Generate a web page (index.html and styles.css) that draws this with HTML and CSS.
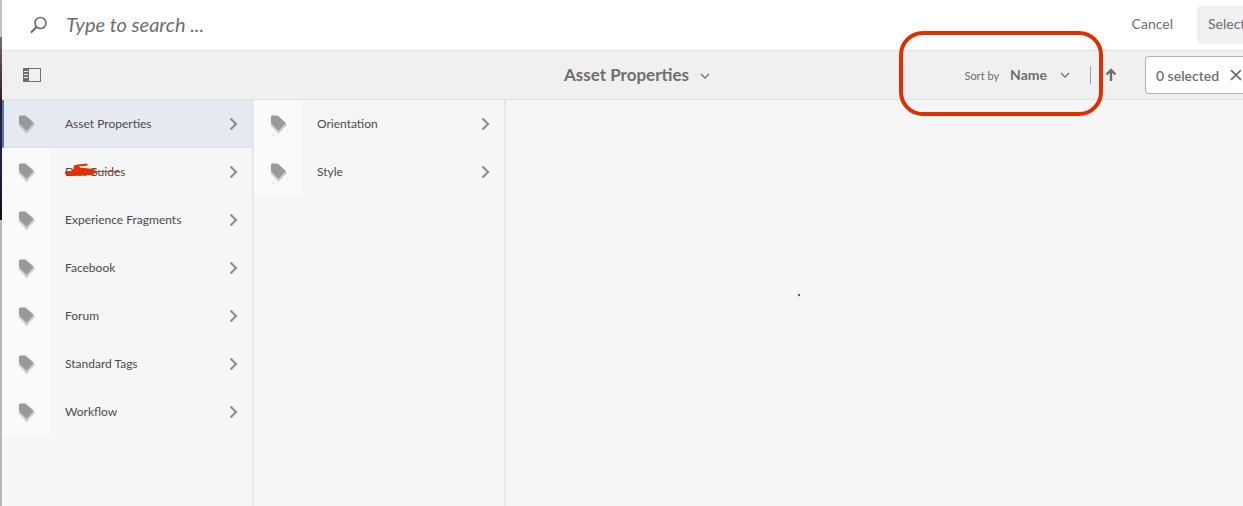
FILE: index.html
```html
<!DOCTYPE html>
<html lang="en">
<head>
	<meta charset="UTF-8">
	<title>Asset Properties</title>
	<link rel="stylesheet" href="styles.css">
</head>
<body>
	<svg class="defs" width="0" height="0">
		<symbol id="tag" viewBox="0 0 18 20"><path d="M1 10L8.500 18 16 10l.7.700L8.500 19.500 1 11.500z" fill="#b4b4b4"/><path d="M1.500 2h6l8 7-7 7.800-7-7.500z" fill="#9a9a9a" stroke="#9a9a9a" stroke-linejoin="round"/></symbol>
		<symbol id="go" viewBox="0 0 9 14"><path d="M1.500 1.500L7 7l-5.500 5.500" fill="none" stroke="#8e8e8e" stroke-width="2.200"/></symbol>
		<symbol id="chev" viewBox="0 0 10 6"><path d="M1 1l4 4 4-4" fill="none" stroke="#6e6e6e" stroke-width="1.300"/></symbol>
	</svg>
	<div class="edge"></div>
	<div class="page">
		<header class="search">
			<svg class="search-icon" width="20" height="20" viewBox="0 0 20 20"><circle cx="11.500" cy="8" r="5.500" fill="none" stroke="#6e6e6e" stroke-width="1.600"/><path d="M7.500 12L2.500 17" stroke="#6e6e6e" stroke-width="2.200" stroke-linecap="round"/></svg>
			<span class="search-text">Type to search ...</span>
			<span class="cancel">Cancel</span>
			<span class="select">Select</span>
		</header>
		<div class="toolbar">
			<svg class="rail-icon" width="18" height="14" viewBox="0 0 18 14"><rect x="0.500" y="0.500" width="17" height="13" fill="none" stroke="#6e6e6e"/><rect x="0" y="0" width="6" height="14" fill="#6e6e6e"/><path d="M1 3.500h4M1 6.500h4M1 9.500h4" stroke="#f0f0f0"/></svg>
			<div class="title">Asset Properties
				<svg class="chev" width="10" height="6"><use href="#chev"/></svg>
			</div>
			<div class="sort">
				<span class="sort-label">Sort by</span>
				<span class="sort-value">Name</span>
				<svg class="chev" width="10" height="6"><use href="#chev"/></svg>
				<span class="divider"></span>
				<svg class="arrow" width="12" height="14" viewBox="0 0 12 14"><path d="M6 13V2M1.500 6.500L6 2l4.500 4.500" fill="none" stroke="#6e6e6e" stroke-width="2.400"/></svg>
			</div>
			<div class="selected">0 selected
				<svg width="14" height="14" viewBox="0 0 14 14"><path d="M2 2l10 10M12 2L2 12" stroke="#6e6e6e" stroke-width="1.800"/></svg>
			</div>
		</div>
		<div class="columns">
			<ul class="col">
				<li class="row active"><span class="tag"><svg width="18" height="20"><use href="#tag"/></svg></span><span class="name">Asset Properties</span><svg class="go" width="9" height="14"><use href="#go"/></svg></li>
				<li class="row"><span class="tag"><svg width="18" height="20"><use href="#tag"/></svg></span><span class="name">Dxx Guides<svg class="scribble" width="60" height="18" viewBox="0 0 60 18"><path d="M1 9.500l8-1 1-5 4-1 9-1 1 2-9 1 1 1 9 1 6 1 1 2-2 3-8 1-16 .5-5-2z" fill="#e0300a"/><path d="M30 9.500h26" fill="none" stroke="#c8452a" stroke-width="1"/></svg></span><svg class="go" width="9" height="14"><use href="#go"/></svg></li>
				<li class="row"><span class="tag"><svg width="18" height="20"><use href="#tag"/></svg></span><span class="name">Experience Fragments</span><svg class="go" width="9" height="14"><use href="#go"/></svg></li>
				<li class="row"><span class="tag"><svg width="18" height="20"><use href="#tag"/></svg></span><span class="name">Facebook</span><svg class="go" width="9" height="14"><use href="#go"/></svg></li>
				<li class="row"><span class="tag"><svg width="18" height="20"><use href="#tag"/></svg></span><span class="name">Forum</span><svg class="go" width="9" height="14"><use href="#go"/></svg></li>
				<li class="row"><span class="tag"><svg width="18" height="20"><use href="#tag"/></svg></span><span class="name">Standard Tags</span><svg class="go" width="9" height="14"><use href="#go"/></svg></li>
				<li class="row"><span class="tag"><svg width="18" height="20"><use href="#tag"/></svg></span><span class="name">Workflow</span><svg class="go" width="9" height="14"><use href="#go"/></svg></li>
			</ul>
			<ul class="col">
				<li class="row"><span class="tag"><svg width="18" height="20"><use href="#tag"/></svg></span><span class="name">Orientation</span><svg class="go" width="9" height="14"><use href="#go"/></svg></li>
				<li class="row"><span class="tag"><svg width="18" height="20"><use href="#tag"/></svg></span><span class="name">Style</span><svg class="go" width="9" height="14"><use href="#go"/></svg></li>
			</ul>
			<div class="preview"></div>
		</div>
	</div>
	<div class="callout"></div>
	<div class="dot"></div>
</body>
</html>
```

FILE: styles.css
```css
* {
	padding: 0;
	margin: 0;
	box-sizing: border-box;
}
ul {
	list-style: none;
}
html, body {
	width: 1243px;
	height: 506px;
	overflow: hidden;
}
body {
	position: relative;
	background: #f6f6f6;
	font-family: "Lato", "Noto Sans", sans-serif;
	color: #4b4b4b;
}
.defs {
	position: absolute;
}
.page {
	height: 506px;
	margin-left: 2px;
	display: flex;
	flex-direction: column;
}
.edge {
	position: absolute;
	left: 0;
	top: 0;
	width: 2px;
	height: 506px;
	background: linear-gradient(#c4c4c4 37px, #7a6a72 37px, #2a1c2a 100px, #1a2050 170px, #111 220px, #b8b8b8 220px);
}
.search {
	height: 51px;
	flex: none;
	background: #fff;
	border-bottom: 1px solid #e1e1e1;
	display: flex;
	align-items: center;
	padding-left: 27px;
}
.search-text {
	margin-left: 17px;
	margin-bottom: 2px;
	font-size: 20px;
	font-style: italic;
	color: #6e6e6e;
}
.cancel {
	margin-left: auto;
	margin-bottom: 3px;
	font-size: 14px;
	color: #6e6e6e;
}
.select {
	margin-left: 24px;
	width: 46px;
	height: 38px;
	padding-left: 11px;
	line-height: 36px;
	font-size: 14px;
	color: #6e6e6e;
	background: #f0f0f0;
	border-radius: 4px 0 0 4px;
	overflow: hidden;
	white-space: nowrap;
}
.toolbar {
	height: 49px;
	flex: none;
	background: #f0f0f0;
	border-bottom: 1px solid #e1e1e1;
	display: flex;
	align-items: center;
	position: relative;
	padding-left: 21px;
}
.title {
	position: absolute;
	left: 562px;
	top: 13px;
	font-size: 17px;
	font-weight: 700;
	color: #6e6e6e;
	white-space: nowrap;
}
.title .chev {
	margin-left: 7px;
	vertical-align: 2px;
}
.sort {
	margin-left: auto;
	display: flex;
	align-items: center;
}
.sort-label {
	font-size: 11px;
	color: #6e6e6e;
}
.sort-value {
	margin-left: 11px;
	margin-bottom: 2px;
	font-size: 14px;
	font-weight: 700;
	color: #6e6e6e;
}
.sort .chev {
	margin-left: 13px;
}
.divider {
	width: 1px;
	height: 18px;
	margin-left: 20px;
	background: #a0a0a0;
}
.arrow {
	margin-left: 14px;
}
.selected {
	width: 98px;
	height: 38px;
	margin-left: 28px;
	padding-left: 10px;
	flex: none;
	display: flex;
	align-items: center;
	gap: 10px;
	font-size: 14px;
	font-weight: 600;
	color: #6e6e6e;
	background: #fff;
	border: 1px solid #b3b3b3;
	border-right: 0;
	border-radius: 4px 0 0 4px;
	white-space: nowrap;
}
.columns {
	flex: 1;
	display: flex;
}
.col {
	width: 252px;
	flex: none;
	border-right: 2px solid #e8e8e8;
}
.row {
	height: 48px;
	display: flex;
	align-items: center;
	font-size: 12px;
	padding-right: 14px;
}
.row.active {
	background: #e6e9ef;
	border-left: 2px solid #4a78c0;
	border-bottom: 1px solid #d5dde9;
}
.row.active .tag {
	width: 46px;
	padding-left: 14px;
	background: none;
}
.tag {
	width: 48px;
	height: 100%;
	flex: none;
	padding-left: 16px;
	display: flex;
	align-items: center;
	background: #fafafa;
}
.name {
	margin-left: 15px;
	margin-bottom: 1px;
	flex: 1;
	color: #4b4b4b;
	position: relative;
}
.scribble {
	position: absolute;
	left: -1px;
	top: -2px;
}
.preview {
	flex: 1;
}
.callout {
	position: absolute;
	left: 899px;
	top: 31px;
	width: 204px;
	height: 85px;
	border: 4px solid #e02e00;
	border-radius: 24px;
}
.dot {
	position: absolute;
	left: 798px;
	top: 294px;
	width: 2px;
	height: 2px;
	background: #e02e00;
}
```
